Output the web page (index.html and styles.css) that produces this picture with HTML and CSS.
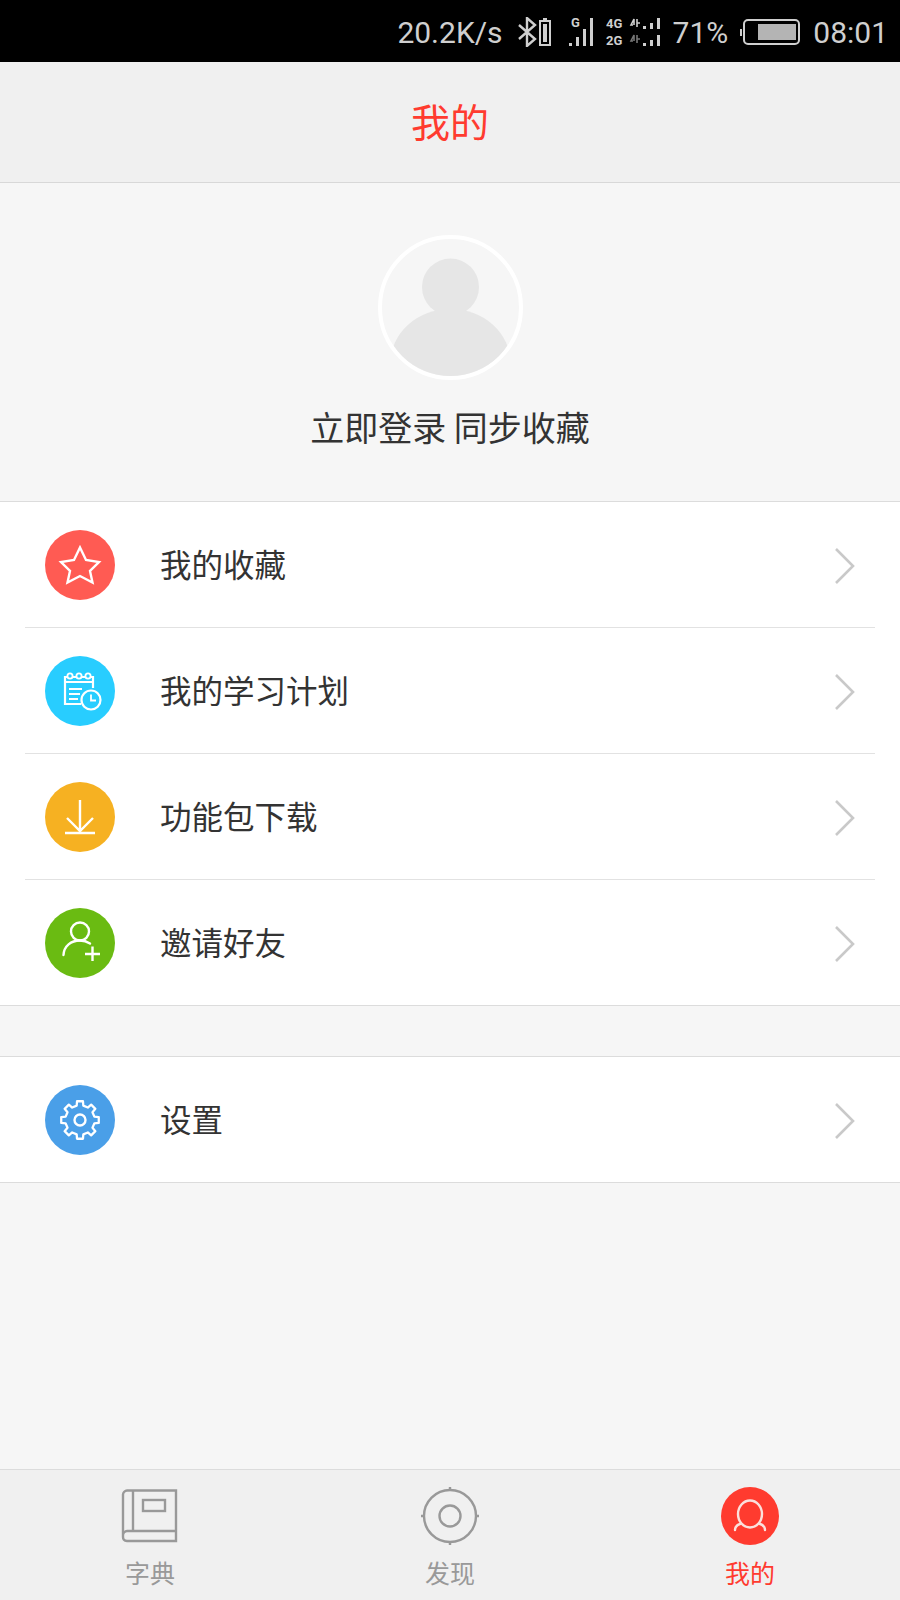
FILE: index.html
```html
<!DOCTYPE html>
<html lang="zh-CN">
<head>
  <meta charset="UTF-8">
  <title>我的</title>
  <link rel="stylesheet" href="styles.css">
</head>
<body>
  <div class="app">

    <!-- Status bar -->
    <div class="status-bar">
      <span class="speed">20.2K/s</span>
      <svg class="st-bt" width="34" height="30" viewBox="0 0 34 30">
        <path d="M1 8 L17 22 L9 29 V1 L17 8 L1 22" fill="none" stroke="#cfcfcf" stroke-width="2.400"/>
        <rect x="22" y="4" width="10" height="24" fill="none" stroke="#cfcfcf" stroke-width="2"/>
        <rect x="25" y="1" width="4" height="3" fill="#cfcfcf"/>
        <rect x="25" y="7" width="4" height="18" fill="#cfcfcf"/>
      </svg>
      <svg class="st-sig" width="26" height="34" viewBox="0 -2 26 34">
        <text class="net-label" x="3" y="10">G</text>
        <rect x="1" y="26" width="3" height="3" fill="#cfcfcf"/>
        <rect x="8" y="20" width="3" height="9" fill="#cfcfcf"/>
        <rect x="15" y="12" width="3" height="17" fill="#cfcfcf"/>
        <rect x="22" y="1" width="3" height="28" fill="#cfcfcf"/>
      </svg>
      <svg class="st-dual" width="54" height="30" viewBox="0 0 54 30">
        <text class="net-label" x="0" y="11">4G</text>
        <text class="net-label" x="0" y="28">2G</text>
        <path d="M27 8 H25 L28 2 V8 M31 2 V10 M31 6 H34" fill="none" stroke="#cfcfcf" stroke-width="1.600"/>
        <path d="M27 24 H25 L28 18 V24 M31 18 V26 M31 22 H34" fill="none" stroke="#777" stroke-width="1.600"/>
        <rect x="37" y="9" width="3" height="3" fill="#cfcfcf"/>
        <rect x="44" y="6" width="3" height="6" fill="#cfcfcf"/>
        <rect x="51" y="1" width="3" height="11" fill="#cfcfcf"/>
        <rect x="37" y="26" width="3" height="3" fill="#cfcfcf"/>
        <rect x="44" y="23" width="3" height="6" fill="#cfcfcf"/>
        <rect x="51" y="18" width="3" height="11" fill="#cfcfcf"/>
      </svg>
      <span class="pct">71%</span>
      <svg class="st-batt" width="60" height="26" viewBox="0 0 60 26">
        <rect x="0" y="10" width="2" height="7" fill="#cfcfcf"/>
        <rect x="4" y="1" width="55" height="24" rx="4" fill="none" stroke="#cfcfcf" stroke-width="2"/>
        <rect x="18" y="5" width="38" height="16" fill="#b4b4b4"/>
      </svg>
      <span class="clock">08:01</span>
    </div>

    <div class="title-bar">我的</div>

    <!-- Login area -->
    <div class="profile">
      <div class="avatar">
        <svg width="137" height="137" viewBox="0 0 137 137">
          <circle cx="68.500" cy="48" r="28.500" fill="#e6e6e6"/>
          <ellipse cx="68.500" cy="124" rx="60" ry="54" fill="#e6e6e6"/>
        </svg>
      </div>
      <div class="login-text">立即登录 同步收藏</div>
    </div>

    <!-- Main menu -->
    <div class="menu">
      <div class="menu-row">
        <div class="menu-inner">
          <svg class="menu-icon" width="70" height="70" viewBox="0 0 70 70">
            <circle cx="35" cy="35" r="35" fill="#ff5b53"/>
            <polygon points="35,17.500 41,30 54,32 45,41 47.500,52.500 35,46 22.500,52.500 25,41 16,32 29,30" fill="none" stroke="#fff" stroke-width="2.400"/>
          </svg>
          <span class="menu-label">我的收藏</span>
          <svg class="chevron" width="22" height="38" viewBox="0 0 22 38"><path d="M2 2 L19 19 L2 36" fill="none" stroke="#c9c9c9" stroke-width="2.600"/></svg>
        </div>
      </div>
      <div class="menu-row">
        <div class="menu-inner">
          <svg class="menu-icon" width="70" height="70" viewBox="0 0 70 70">
            <circle cx="35" cy="35" r="35" fill="#28cdff"/>
            <path d="M36 48 H20 V21 H48 V32 M20 26 H48 M24 33 H37 M24 38 H35 M24 43 H33" fill="none" stroke="#fff" stroke-width="2.200"/>
            <circle cx="25" cy="20" r="2.600" fill="#28cdff" stroke="#fff" stroke-width="1.800"/>
            <circle cx="34" cy="20" r="2.600" fill="#28cdff" stroke="#fff" stroke-width="1.800"/>
            <circle cx="43" cy="20" r="2.600" fill="#28cdff" stroke="#fff" stroke-width="1.800"/>
            <circle cx="46" cy="44" r="9.500" fill="#28cdff" stroke="#fff" stroke-width="2.200"/>
            <path d="M46 38.500 V44.500 H51" fill="none" stroke="#fff" stroke-width="1.800"/>
          </svg>
          <span class="menu-label">我的学习计划</span>
          <svg class="chevron" width="22" height="38" viewBox="0 0 22 38"><path d="M2 2 L19 19 L2 36" fill="none" stroke="#c9c9c9" stroke-width="2.600"/></svg>
        </div>
      </div>
      <div class="menu-row">
        <div class="menu-inner">
          <svg class="menu-icon" width="70" height="70" viewBox="0 0 70 70">
            <circle cx="35" cy="35" r="35" fill="#f6b122"/>
            <path d="M35 18 V50 M22 36 L35 49 L48 36 M20 51 H50" fill="none" stroke="#fff" stroke-width="2.400"/>
          </svg>
          <span class="menu-label">功能包下载</span>
          <svg class="chevron" width="22" height="38" viewBox="0 0 22 38"><path d="M2 2 L19 19 L2 36" fill="none" stroke="#c9c9c9" stroke-width="2.600"/></svg>
        </div>
      </div>
      <div class="menu-row">
        <div class="menu-inner">
          <svg class="menu-icon" width="70" height="70" viewBox="0 0 70 70">
            <circle cx="35" cy="35" r="35" fill="#6abb12"/>
            <circle cx="35" cy="23.500" r="9" fill="none" stroke="#fff" stroke-width="2.400"/>
            <path d="M18.500 47 C19 38 26 32.500 35 32.500 C39 32.500 42 33.500 45 35.500" fill="none" stroke="#fff" stroke-width="2.400" stroke-linecap="round"/>
            <path d="M40 46 H55 M47.500 38.500 V53" fill="none" stroke="#fff" stroke-width="2.400"/>
          </svg>
          <span class="menu-label">邀请好友</span>
          <svg class="chevron" width="22" height="38" viewBox="0 0 22 38"><path d="M2 2 L19 19 L2 36" fill="none" stroke="#c9c9c9" stroke-width="2.600"/></svg>
        </div>
      </div>
    </div>

    <div class="menu menu-settings">
      <div class="menu-row">
        <div class="menu-inner">
          <svg class="menu-icon" width="70" height="70" viewBox="0 0 70 70">
            <circle cx="35" cy="35" r="35" fill="#4a9fe8"/>
            <polygon transform="translate(35 35) scale(0.95)" points="-3.49,-15.1 -3.13,-19.75 3.13,-19.75 3.49,-15.1 8.21,-13.14 11.76,-16.18 16.18,-11.76 13.14,-8.21 15.1,-3.49 19.75,-3.13 19.75,3.13 15.1,3.49 13.14,8.21 16.18,11.76 11.76,16.18 8.21,13.14 3.49,15.1 3.13,19.75 -3.13,19.75 -3.49,15.1 -8.21,13.14 -11.76,16.18 -16.18,11.76 -13.14,8.21 -15.1,3.49 -19.75,3.13 -19.75,-3.13 -15.1,-3.49 -13.14,-8.21 -16.18,-11.76 -11.76,-16.18 -8.21,-13.14" fill="none" stroke="#fff" stroke-width="2.400" stroke-linejoin="round"/>
            <circle cx="35" cy="35" r="5.500" fill="none" stroke="#fff" stroke-width="2.400"/>
          </svg>
          <span class="menu-label">设置</span>
          <svg class="chevron" width="22" height="38" viewBox="0 0 22 38"><path d="M2 2 L19 19 L2 36" fill="none" stroke="#c9c9c9" stroke-width="2.600"/></svg>
        </div>
      </div>
    </div>

    <!-- Bottom tabs -->
    <div class="tab-bar">
      <div class="tab">
        <svg width="60" height="60" viewBox="0 0 60 60">
          <path d="M7 4.500 H56 V55 H7 C4 55 3 53 3 51 V8.500 C3 6.500 5 4.500 7 4.500 Z M13 4.500 V45 M3 49 C3 47 5 45 7 45 H56" fill="none" stroke="#999" stroke-width="2.400"/>
          <rect x="23" y="14" width="22" height="11" fill="none" stroke="#999" stroke-width="2.400"/>
        </svg>
        <span class="tab-label">字典</span>
      </div>
      <div class="tab">
        <svg width="60" height="60" viewBox="0 0 60 60">
          <circle cx="30" cy="30" r="26" fill="none" stroke="#999" stroke-width="2.400"/>
          <circle cx="30" cy="30" r="10.500" fill="none" stroke="#999" stroke-width="2.400"/>
          <path d="M30 1 V4 M30 56 V59 M1 30 H4 M56 30 H59" fill="none" stroke="#999" stroke-width="2.400"/>
        </svg>
        <span class="tab-label">发现</span>
      </div>
      <div class="tab active">
        <svg width="60" height="60" viewBox="0 0 60 60">
          <circle cx="30" cy="30" r="29" fill="#ff3b2f"/>
          <ellipse cx="30" cy="28" rx="12" ry="13.500" fill="none" stroke="#fbe0dc" stroke-width="2.400"/>
          <path d="M15 44 C15 41 17 39 20 38 M45 44 C45 41 43 39 40 38" fill="none" stroke="#fbe0dc" stroke-width="2.400" stroke-linecap="round"/>
        </svg>
        <span class="tab-label">我的</span>
      </div>
    </div>

  </div>
</body>
</html>
```

FILE: styles.css
```css
* {
  box-sizing: border-box;
}
body {
  margin: 0;
  background: #f6f6f6;
  font-family: "Noto Sans CJK SC", "Noto Sans", sans-serif;
  color: #333;
}
.app {
  display: flex;
  flex-direction: column;
  width: 900px;
  height: 1600px;
}

/* status bar */
.status-bar {
  display: flex;
  align-items: center;
  justify-content: flex-end;
  height: 62px;
  padding-top: 2px;
  padding-right: 12px;
  background: #000;
  color: #cfcfcf;
  font-family: Roboto, sans-serif;
  font-size: 30px;
}
.net-label {
  fill: #cfcfcf;
  font-family: Roboto, sans-serif;
  font-size: 13px;
  font-weight: 700;
}
.st-bt {
  margin-left: 15px;
}
.st-sig {
  margin-left: 16px;
}
.st-dual {
  margin-left: 12px;
}
.pct {
  margin-left: 13px;
}
.st-batt {
  margin-left: 12px;
}
.clock {
  margin-left: 13px;
}

/* title */
.title-bar {
  display: flex;
  align-items: center;
  justify-content: center;
  height: 121px;
  padding-bottom: 4px;
  background: #f0f0f0;
  border-bottom: 1px solid #d8d8d8;
  color: #ff3b2f;
  font-size: 39px;
}

/* login */
.profile {
  display: flex;
  flex-direction: column;
  align-items: center;
  height: 318px;
  padding-top: 52px;
}
.avatar {
  width: 145px;
  height: 145px;
  border: 4px solid #fff;
  border-radius: 50%;
  overflow: hidden;
}
.avatar svg {
  display: block;
}
.login-text {
  margin-top: 22px;
  font-size: 34px;
  line-height: 50px;
}

/* menu */
.menu {
  background: #fff;
  border-top: 1px solid #dcdcdc;
  border-bottom: 1px solid #dcdcdc;
}
.menu-settings {
  margin-top: 50px;
}
.menu-row {
  padding: 0 25px;
}
.menu-inner {
  display: flex;
  align-items: center;
  height: 126px;
  padding: 0 20px;
  border-bottom: 1px solid #e2e2e2;
}
.menu-row:last-child .menu-inner {
  height: 125px;
  border-bottom: 0;
}
.menu-label {
  flex: 1;
  margin-left: 45px;
  margin-bottom: 3px;
  font-size: 31.500px;
}
.chevron {
  margin-top: 2px;
  margin-right: -1px;
}

/* tabs */
.tab-bar {
  display: flex;
  margin-top: auto;
  height: 131px;
  background: #f0f0f0;
  border-top: 1px solid #dcdcdc;
}
.tab {
  display: flex;
  flex: 1;
  flex-direction: column;
  align-items: center;
  padding-top: 16px;
}
.tab-label {
  margin-top: 8px;
  color: #999;
  font-size: 25px;
  line-height: 36px;
}
.active .tab-label {
  color: #ff3b2f;
}
```
